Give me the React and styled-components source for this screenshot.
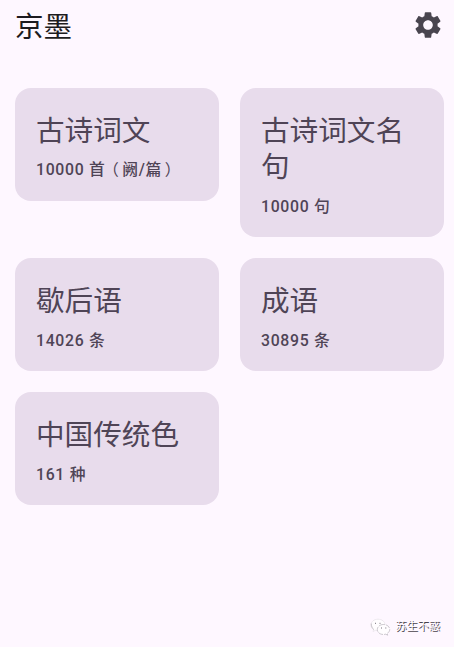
import React from "react";
import styled, { createGlobalStyle } from "styled-components";

const cards = [
  { title: "古诗词文", count: "10000", unit: "首", detail: "阙/篇" },
  { title: "古诗词文名句", count: "10000", unit: "句" },
  { title: "歇后语", count: "14026", unit: "条" },
  { title: "成语", count: "30895", unit: "条" },
  { title: "中国传统色", count: "161", unit: "种" },
];

function App() {
  return (
    <>
      <GlobalStyle />
      <StPage>
        <StHeader>
          <StTitle>京墨</StTitle>
          <StIconButton type="button" aria-label="设置">
            <svg width="32" height="32" viewBox="0 0 24 24" fill="currentColor">
              <path d="M19.14 12.94c.04-.3.06-.61.06-.94 0-.32-.02-.64-.07-.94l2.03-1.58c.18-.14.23-.41.12-.61l-1.92-3.32c-.12-.22-.37-.29-.59-.22l-2.39.96c-.5-.38-1.03-.7-1.62-.94l-.36-2.54c-.04-.24-.24-.41-.48-.41h-3.84c-.24 0-.43.17-.47.41l-.36 2.54c-.59.24-1.13.57-1.62.94l-2.39-.96c-.22-.08-.47 0-.59.22L2.74 8.87c-.12.21-.08.47.12.61l2.03 1.58c-.05.3-.09.63-.09.94s.02.64.07.94l-2.03 1.58c-.18.14-.23.41-.12.61l1.92 3.32c.12.22.37.29.59.22l2.39-.96c.5.38 1.03.7 1.62.94l.36 2.54c.05.24.24.41.48.41h3.84c.24 0 .44-.17.47-.41l.36-2.54c.59-.24 1.13-.56 1.62-.94l2.39.96c.22.08.47 0 .59-.22l1.92-3.32c.12-.22.07-.47-.12-.61l-2.01-1.58zM12 15.6c-1.98 0-3.6-1.62-3.6-3.6s1.62-3.6 3.6-3.6 3.6 1.62 3.6 3.6-1.62 3.6-3.6 3.6z" />
            </svg>
          </StIconButton>
        </StHeader>

        <StGrid>
          {cards.map((card) => (
            <StCard key={card.title}>
              <StCardTitle>{card.title}</StCardTitle>
              <StCardCount>
                {card.count} {card.unit}
                {card.detail && (
                  <>
                    <StParen $before={5.3} $after={2.7}>（</StParen>
                    {card.detail}
                    <StParen $before={2.7} $after={5.3}>）</StParen>
                  </>
                )}
              </StCardCount>
            </StCard>
          ))}
        </StGrid>

        <StWatermark>
          <svg width="21" height="18" viewBox="0 0 21 18" fill="#fffdff" stroke="#aaa5ac" strokeWidth="0.6">
            <path d="M8 1.2C4 1.2 1 3.7 1 7c0 1.9 1 3.5 2.6 4.5L3 13.5l2.4-1.2c.8.2 1.7.4 2.6.4 4 0 7-2.6 7-5.8S12 1.2 8 1.2z" stroke="#e2dde4" />
            <path d="M1.2 5.5c.2 3 1 4.8 2.6 6" fill="none" />
            <path d="M13.5 6.5c-3.5 0-6.2 2.2-6.2 5s2.7 5 6.2 5c.8 0 1.5-.1 2.2-.3l2 1-.5-1.8c1.5-.9 2.5-2.3 2.5-3.9 0-2.8-2.7-5-6.2-5z" strokeDasharray="5 1" />
            <path d="M5.5 4.8v1M10 4.8v1M11.5 9.5v1M15.8 9.5v1" stroke="#77717a" strokeWidth="1" />
          </svg>
          <StAccount>苏生不惑</StAccount>
        </StWatermark>
      </StPage>
    </>
  );
}

export default App;

const GlobalStyle = createGlobalStyle`
  * {
    box-sizing: border-box;
  }
  body {
    margin: 0;
    background-color: #fef7ff;
    font-family: Roboto, "Noto Sans CJK SC", sans-serif;
  }
`;

const StPage = styled.div`
  height: 647px;
  display: flex;
  flex-direction: column;
  overflow: hidden;
`;

const StHeader = styled.header`
  height: 88px;
  padding: 9px 10px 0 15px;
  display: flex;
  align-items: flex-start;
  justify-content: space-between;
`;

const StTitle = styled.h1`
  margin: 0;
  color: #1d1b20;
  font-weight: 400;
  font-size: 28.5px;
  line-height: 38px;
`;

const StIconButton = styled.button`
  height: 32px;
  padding: 0;
  border: none;
  background: none;
  color: #49454f;
  cursor: pointer;
`;

const StGrid = styled.main`
  display: grid;
  grid-template-columns: repeat(2, 204px);
  gap: 21.3px 21px;
  align-items: start;
  padding-left: 15px;
`;

const StCard = styled.section`
  padding: 25px 21px 19.2px;
  border-radius: 16px;
  background-color: #e8dcec;
  color: #4f4456;
`;

const StCardTitle = styled.h2`
  margin: 0;
  font-weight: 400;
  font-size: 28.6px;
  line-height: 36.4px;
`;

const StCardCount = styled.p`
  margin: 9px 0 0;
  font-weight: 500;
  font-size: 15.8px;
  line-height: 23px;
  letter-spacing: 0.7px;
  white-space: nowrap;
`;

/* half-width bracket, padded back to a full cell so it sits in the middle */
const StParen = styled.span`
  padding-left: ${(props) => props.$before}px;
  padding-right: ${(props) => props.$after}px;
  font-weight: 400;
  font-feature-settings: "halt";
`;

const StWatermark = styled.footer`
  margin-top: auto;
  padding: 0 14px 11px 0;
  display: flex;
  align-items: center;
  justify-content: flex-end;
  gap: 4px;
`;

const StAccount = styled.span`
  color: #fffaff;
  font-size: 11.2px;
  line-height: 18px;
  text-shadow: 1px 1px 0 #48434b;
`;
